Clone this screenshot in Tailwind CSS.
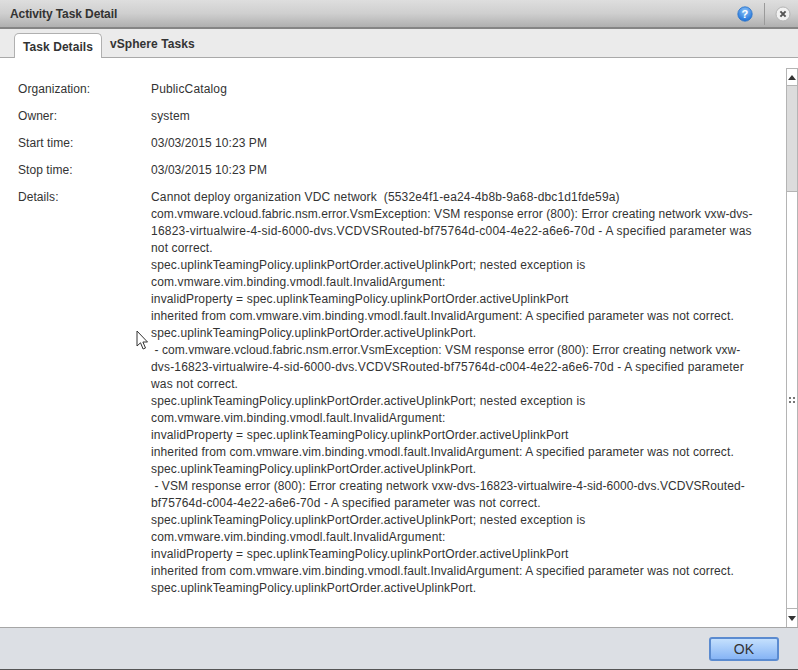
<!DOCTYPE html>
<html><head><meta charset="utf-8">
<script src="https://cdn.jsdelivr.net/npm/@tailwindcss/browser@4"></script>
</head>
<body class="m-0 overflow-hidden bg-white">
<div class="relative w-[798px] h-[670px] flex flex-col overflow-hidden font-['Liberation_Sans',Arial,sans-serif] text-[12px] text-[#333] tracking-[0.065px]">
  <!-- title bar -->
  <header class="h-[29px] shrink-0 flex items-center pl-[10px] bg-gradient-to-b from-[#dedede] via-[#cfcfcf] to-[#b0b0b0] border-b-2 border-[#858585]">
    <h1 class="font-bold text-[12px] text-[#333] grow tracking-[-0.1px]">Activity Task Detail</h1>
    <svg class="w-[16px] h-[16px] mr-[11px]" viewBox="0 0 16 16"><defs><radialGradient id="h" cx="50%" cy="30%" r="70%"><stop offset="0" stop-color="#8ec4f8"/><stop offset="1" stop-color="#1c6fd8"/></radialGradient></defs><circle cx="8" cy="8" r="7.2" fill="url(#h)" stroke="#2a73c9" stroke-width=".8"/><text x="8" y="12" font-size="11" font-weight="700" text-anchor="middle" fill="#fff" font-family="Liberation Sans">?</text></svg>
    <div class="w-px h-[22px] bg-[#9a9a9a] mr-[10px]"></div>
    <svg class="w-[16px] h-[16px] mr-[7px]" viewBox="0 0 16 16"><circle cx="8" cy="8" r="7" fill="#f2f2f2" stroke="#b5b5b5"/><path d="M5.4 5.4l5.2 5.2M10.6 5.4l-5.2 5.2" stroke="#555" stroke-width="2"/></svg>
  </header>
  <!-- tabs -->
  <nav class="h-[29px] shrink-0 flex items-end pl-[14px] bg-[#ebebeb] border-b border-[#a9a9a9] font-bold">
    <div class="h-[25px] w-[88px] -mb-px pt-px flex items-center justify-center bg-white border border-b-0 border-[#b0b0b0] rounded-t-[5px]">Task Details</div>
    <div class="h-[25px] pl-[8px] pb-[2px] flex items-center">vSphere Tasks</div>
  </nav>
  <!-- body -->
  <main class="h-[570px] shrink-0 flex bg-white border-b border-[#a6a6a6]">
    <div class="grow pl-[18px] pt-[23px] leading-[17px] whitespace-nowrap">
      <div class="flex h-[27px]"><div class="w-[133px]">Organization:</div><div class="tracking-[0.15px]">PublicCatalog</div></div>
      <div class="flex h-[27px]"><div class="w-[133px]">Owner:</div><div class="tracking-[0.15px]">system</div></div>
      <div class="flex h-[27px]"><div class="w-[133px]">Start time:</div><div>03/03/2015 10:23 PM</div></div>
      <div class="flex h-[27px]"><div class="w-[133px]">Stop time:</div><div>03/03/2015 10:23 PM</div></div>
      <div class="flex"><div class="w-[133px]">Details:</div><div class="[&>div]:whitespace-pre tracking-[0.15px]">
        <div>Cannot deploy organization VDC network  (5532e4f1-ea24-4b8b-9a68-dbc1d1fde59a)</div>
        <div class="tracking-[0.075px]">com.vmware.vcloud.fabric.nsm.error.VsmException: VSM response error (800): Error creating network vxw-dvs-</div>
        <div class="tracking-[0.225px]">16823-virtualwire-4-sid-6000-dvs.VCDVSRouted-bf75764d-c004-4e22-a6e6-70d - A specified parameter was</div>
        <div>not correct.</div>
        <div>spec.uplinkTeamingPolicy.uplinkPortOrder.activeUplinkPort; nested exception is</div>
        <div>com.vmware.vim.binding.vmodl.fault.InvalidArgument:</div>
        <div>invalidProperty = spec.uplinkTeamingPolicy.uplinkPortOrder.activeUplinkPort</div>
        <div class="tracking-[0.12px]">inherited from com.vmware.vim.binding.vmodl.fault.InvalidArgument: A specified parameter was not correct.</div>
        <div>spec.uplinkTeamingPolicy.uplinkPortOrder.activeUplinkPort.</div>
        <div class="tracking-[0.075px]"> - com.vmware.vcloud.fabric.nsm.error.VsmException: VSM response error (800): Error creating network vxw-</div>
        <div class="tracking-[0.165px]">dvs-16823-virtualwire-4-sid-6000-dvs.VCDVSRouted-bf75764d-c004-4e22-a6e6-70d - A specified parameter</div>
        <div>was not correct.</div>
        <div>spec.uplinkTeamingPolicy.uplinkPortOrder.activeUplinkPort; nested exception is</div>
        <div>com.vmware.vim.binding.vmodl.fault.InvalidArgument:</div>
        <div>invalidProperty = spec.uplinkTeamingPolicy.uplinkPortOrder.activeUplinkPort</div>
        <div class="tracking-[0.12px]">inherited from com.vmware.vim.binding.vmodl.fault.InvalidArgument: A specified parameter was not correct.</div>
        <div>spec.uplinkTeamingPolicy.uplinkPortOrder.activeUplinkPort.</div>
        <div class="tracking-[0.065px]"> - VSM response error (800): Error creating network vxw-dvs-16823-virtualwire-4-sid-6000-dvs.VCDVSRouted-</div>
        <div>bf75764d-c004-4e22-a6e6-70d - A specified parameter was not correct.</div>
        <div>spec.uplinkTeamingPolicy.uplinkPortOrder.activeUplinkPort; nested exception is</div>
        <div>com.vmware.vim.binding.vmodl.fault.InvalidArgument:</div>
        <div>invalidProperty = spec.uplinkTeamingPolicy.uplinkPortOrder.activeUplinkPort</div>
        <div class="tracking-[0.12px]">inherited from com.vmware.vim.binding.vmodl.fault.InvalidArgument: A specified parameter was not correct.</div>
        <div>spec.uplinkTeamingPolicy.uplinkPortOrder.activeUplinkPort.</div>
      </div></div>
    </div>
    <!-- scrollbar -->
    <div class="w-[12px] mt-[10px] flex flex-col border-x border-[#b4b4b4] bg-white shrink-0">
      <div class="h-[18px] flex items-center justify-center border-y border-[#b4b4b4]"><div class="w-0 h-0 border-x-[4px] border-x-transparent border-b-[5px] border-b-[#333]"></div></div>
      <div class="h-[105px] bg-[#dcdcdc]"></div>
      <div class="grow flex items-center justify-center border-y border-[#b4b4b4]">
        <div class="grid grid-cols-2 gap-[2px]"><span class="w-[2px] h-[2px] bg-[#777]"></span><span class="w-[2px] h-[2px] bg-[#777]"></span><span class="w-[2px] h-[2px] bg-[#777]"></span><span class="w-[2px] h-[2px] bg-[#777]"></span></div>
      </div>
      <div class="h-[18px] flex items-center justify-center"><div class="w-0 h-0 border-x-[4px] border-x-transparent border-t-[5px] border-t-[#333]"></div></div>
    </div>
  </main>
  <!-- footer -->
  <footer class="grow flex items-start justify-end pr-[19px] pt-[9px] bg-[#dcdfe4] border-b border-[#555]">
    <button class="w-[70px] h-[24px] rounded-[3px] border-2 border-[#5b8bd0] bg-gradient-to-b from-[#c4e0fd] to-[#86b4f5] text-[14px] text-[#333] leading-none">OK</button>
  </footer>
  <!-- mouse pointer -->
  <svg class="absolute left-[136px] top-[330px] w-[14px] h-[21px]" viewBox="0 0 14 21"><path d="M1 1v15l3.5-3.2 2.6 6.2 2.4-1-2.6-6h4.6z" fill="#fff" stroke="#333" stroke-width="1"/></svg>
</div>
</body></html>
